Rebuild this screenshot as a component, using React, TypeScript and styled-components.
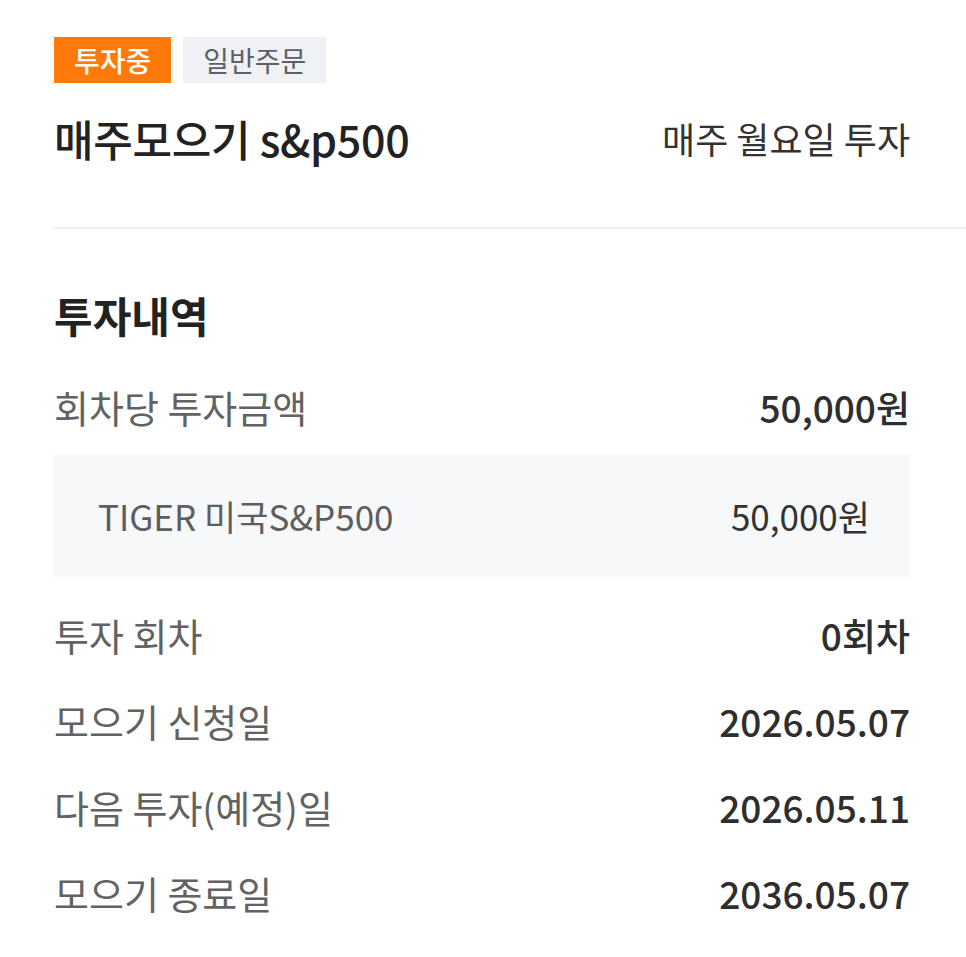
import React from 'react';
import styled, { createGlobalStyle } from 'styled-components';

const GlobalStyle = createGlobalStyle`
  html, body {
    margin: 0;
    padding: 0;
    background: #ffffff;
  }
  body {
    font-family: "Noto Sans CJK KR", "Noto Sans", sans-serif;
    color: #222222;
    -webkit-font-smoothing: antialiased;
  }
`;

const Page = styled.div`
  width: 966px;
  min-height: 957px;
  padding-top: 37px;
  box-sizing: border-box;
  overflow: hidden;
`;

const Inner = styled.div`
  padding: 0 56px 0 54px;
`;

const TagRow = styled.div`
  display: flex;
  gap: 12px;
`;

const Tag = styled.span<{ $active?: boolean }>`
  display: inline-flex;
  align-items: center;
  justify-content: center;
  height: 46px;
  padding: 0 20px;
  font-size: 28px;
  font-weight: ${(p) => (p.$active ? 500 : 400)};
  line-height: 1;
  background: ${(p) => (p.$active ? '#ff7a0b' : '#eff1f4')};
  color: ${(p) => (p.$active ? '#ffffff' : '#5b6169')};
`;

const Header = styled.div`
  display: flex;
  align-items: center;
  justify-content: space-between;
  margin-top: 33px;
  height: 44px;
`;

const Title = styled.h1`
  margin: 0;
  font-size: 43px;
  font-weight: 500;
  color: #222222;
  line-height: 44px;
  letter-spacing: -0.3px;
`;

const Schedule = styled.span`
  font-size: 36px;
  color: #333333;
  line-height: 44px;
`;

const Divider = styled.hr`
  margin: 67px 0 0 54px;
  border: none;
  height: 2px;
  background: #eeeff1;
`;

const SectionTitle = styled.h2`
  margin: 64px 0 0;
  font-size: 42px;
  font-weight: 700;
  line-height: 44px;
  color: #222222;
`;

const Row = styled.div<{ $gap?: number }>`
  display: flex;
  align-items: center;
  justify-content: space-between;
  height: 86px;
  margin-top: ${(p) => p.$gap ?? 0}px;
`;

const Label = styled.span`
  font-size: 38px;
  color: #626262;
  line-height: 1.2;
`;

const Value = styled.span`
  font-size: 37px;
  font-weight: 500;
  color: #2e2e2e;
  line-height: 1.2;
`;

const Detail = styled.div`
  display: flex;
  align-items: center;
  justify-content: space-between;
  height: 123px;
  margin-top: 4px;
  padding: 0 40px 0 44px;
  background: #f7f8fa;
`;

const DetailName = styled.span`
  font-size: 35px;
  color: #5e5e5e;
`;

const DetailAmount = styled.span`
  font-size: 35px;
  color: #333333;
`;

const rows = [
  { label: '투자 회차', value: '0회차' },
  { label: '모으기 신청일', value: '2026.05.07' },
  { label: '다음 투자(예정)일', value: '2026.05.11' },
  { label: '모으기 종료일', value: '2036.05.07' },
];

export default function App() {
  return (
    <Page>
      <GlobalStyle />
      <Inner>
        <TagRow>
          <Tag $active>투자중</Tag>
          <Tag>일반주문</Tag>
        </TagRow>
        <Header>
          <Title>매주모으기 s&amp;p500</Title>
          <Schedule>매주 월요일 투자</Schedule>
        </Header>
      </Inner>
      <Divider />
      <Inner>
        <SectionTitle>투자내역</SectionTitle>
        <Row $gap={27}>
          <Label>회차당 투자금액</Label>
          <Value>50,000원</Value>
        </Row>
        <Detail>
          <DetailName>TIGER 미국S&amp;P500</DetailName>
          <DetailAmount>50,000원</DetailAmount>
        </Detail>
        {rows.map((r, i) => (
          <Row key={r.label} $gap={i === 0 ? 15 : 0}>
            <Label>{r.label}</Label>
            <Value>{r.value}</Value>
          </Row>
        ))}
      </Inner>
    </Page>
  );
}
